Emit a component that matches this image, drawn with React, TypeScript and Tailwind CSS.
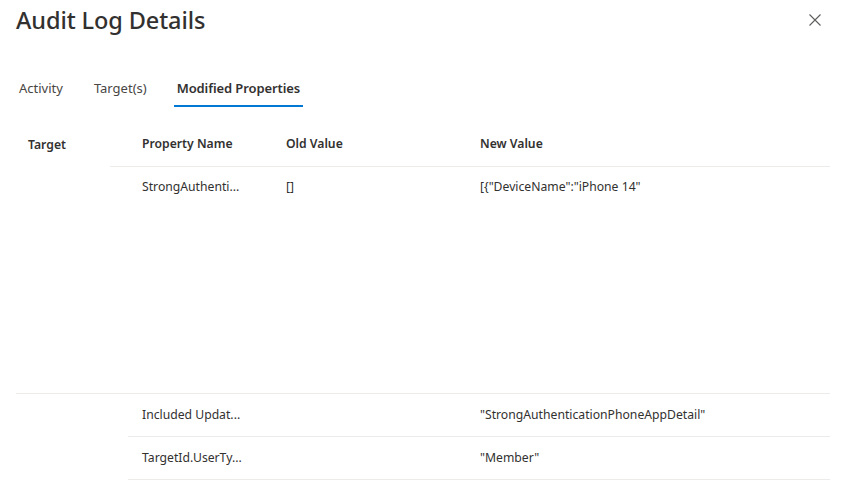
import React from "react";

const font = { fontFamily: '"Segoe UI", "Noto Sans", "Open Sans", sans-serif' };

function CloseIcon() {
  return (
    <svg width="12" height="12" viewBox="0 0 12 12" className="text-[#605e5c]">
      <path d="M0.5 0.5 L11.5 11.5 M11.5 0.5 L0.5 11.5" stroke="currentColor" strokeWidth="1.1" fill="none" />
    </svg>
  );
}

export default function App() {
  return (
    <div className="w-[841px] h-[492px] bg-white overflow-hidden text-[#323130]" style={font}>
      <div className="flex items-start justify-between pl-4 pr-5 pt-[4px]">
        <h1 className="text-[23.5px] leading-[32px] font-medium tracking-[-0.1px]">Audit Log Details</h1>
        <button className="mt-[10px]"><CloseIcon /></button>
      </div>

      <div className="flex items-end mt-[35px] pl-4 text-[13px]">
        <div className="px-[3px] h-[36px] pt-[2px] border-b-2 border-transparent flex items-center text-[#484644]">Activity</div>
        <div className="ml-[25px] px-[3px] h-[36px] pt-[2px] border-b-2 border-transparent flex items-center text-[#484644]">Target(s)</div>
        <div className="ml-[24px] px-[3px] h-[36px] pt-[2px] flex items-center font-[560] border-b-2 border-[#0078d4] tracking-[-0.1px]">
          Modified Properties
        </div>
      </div>

      <div className="mt-[16px] mx-4 w-[814px] text-[12.2px]">
        <div className="flex h-[44px]">
          <div className="w-[94px] pl-3 flex items-center font-[560]">Target</div>
          <div className="flex-1 flex items-center border-b border-[#edebe9] pl-[32px] font-[560]">
            <div className="w-[144px]">Property Name</div>
            <div className="w-[194px]">Old Value</div>
            <div>New Value</div>
          </div>
        </div>

        <div className="flex h-[227px] border-b border-[#edebe9]">
          <div className="w-[126px]" />
          <div className="flex pt-[11px]">
            <div className="w-[144px]">StrongAuthenti...</div>
            <div className="w-[194px]">[]</div>
            <div>[&#123;"DeviceName":"iPhone 14"</div>
          </div>
        </div>

        <div className="ml-[112px] flex items-center h-[43px] border-b border-[#edebe9] pl-[14px]">
          <div className="w-[144px]">Included Updat...</div>
          <div className="w-[194px]"></div>
          <div>"StrongAuthenticationPhoneAppDetail"</div>
        </div>
        <div className="ml-[112px] flex items-center h-[43px] border-b border-[#edebe9] pl-[14px]">
          <div className="w-[144px]">TargetId.UserTy...</div>
          <div className="w-[194px]"></div>
          <div>"Member"</div>
        </div>
      </div>
    </div>
  );
}
